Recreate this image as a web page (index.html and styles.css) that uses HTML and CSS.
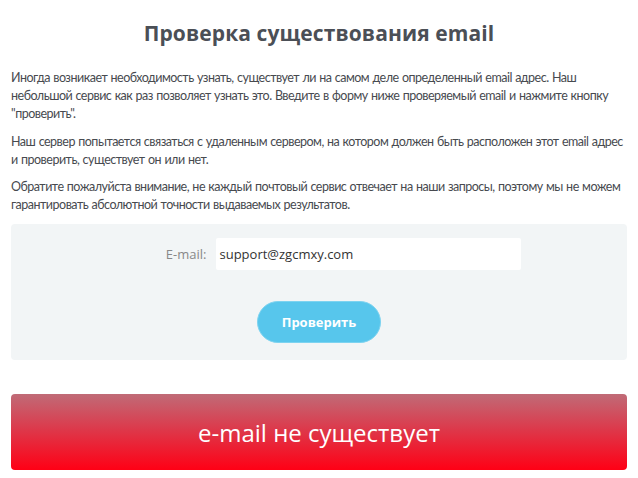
FILE: index.html
```html
<!DOCTYPE html>
<html lang="ru">
<head>
<meta charset="utf-8">
<link rel="stylesheet" href="styles.css">
</head>
<body>
<div class="page">
  <h1 class="title">Проверка существования email</h1>
  <p class="text">Иногда возникает необходимость узнать, существует ли на самом деле определенный email адрес. Наш небольшой сервис как раз позволяет узнать это. Введите в форму ниже проверяемый email и нажмите кнопку "проверить".</p>
  <p class="text">Наш сервер попытается связаться с удаленным сервером, на котором должен быть расположен этот email адрес и проверить, существует он или нет.</p>
  <p class="text">Обратите пожалуйста внимание, не каждый почтовый сервис отвечает на наши запросы, поэтому мы не можем гарантировать абсолютной точности выдаваемых результатов.</p>
  <form class="form">
    <div class="field">
      <label class="label">E-mail:</label>
      <div class="input">support@zgcmxy.com</div>
    </div>
    <div class="actions">
      <button type="button" class="btn">Проверить</button>
    </div>
  </form>
  <div class="result">e-mail не существует</div>
</div>
</body>
</html>
```
FILE: styles.css
```css
* { box-sizing: border-box; }
html, body { margin: 0; padding: 0; background: #fff; }
body { font-family: "Open Sans", "Noto Sans", sans-serif; color: #444; }
.page { padding: 0 11px 0 11px; }
.title {
  margin: 0;
  padding-top: 18px;
  height: 60px;
  text-align: center;
  font-family: "Open Sans", sans-serif;
  font-weight: 700;
  font-size: 21px;
  line-height: 30px;
  color: #4b4f56;
  letter-spacing: 0.1px;
}
.text {
  margin: 9.5px 0 0 0;
  font-family: "Lato", sans-serif;
  font-size: 12.5px;
  letter-spacing: -0.5px;
  word-spacing: 0.6px;
  line-height: 18px;
  color: #474a4f;
}
.title + .text { margin-top: 9px; }
.form {
  margin-top: 10px;
  background: #f2f5f6;
  border-radius: 4px;
  height: 136px;
  padding-top: 14px;
}
.field {
  display: flex;
  align-items: center;
  justify-content: center;
  gap: 9px;
  padding-left: 29px;
}
.label {
  font-size: 13px;
  color: #888;
  width: 60px;
  text-align: right;
}
.input {
  width: 305px;
  height: 32px;
  background: #fff;
  border-radius: 2px;
  font-size: 13px;
  line-height: 32px;
  padding-left: 4px;
  color: #333;
}
.actions {
  display: flex;
  justify-content: center;
  margin-top: 31px;
}
.btn {
  width: 124px;
  height: 42px;
  border-radius: 21px;
  border: 1px solid #7dd3f0;
  background: #57c6ec;
  color: #fff;
  font-family: "Open Sans", sans-serif;
  font-weight: 700;
  font-size: 13px;
  cursor: pointer;
}
.result {
  margin-top: 34px;
  height: 76px;
  border-radius: 4px;
  background: linear-gradient(to bottom, #c06b77 0%, #dc3a4c 45%, #ff0015 100%);
  color: #fff;
  display: flex;
  align-items: center;
  justify-content: center;
  font-family: "Open Sans", sans-serif;
  font-size: 24px;
  font-weight: 500;
}
```
